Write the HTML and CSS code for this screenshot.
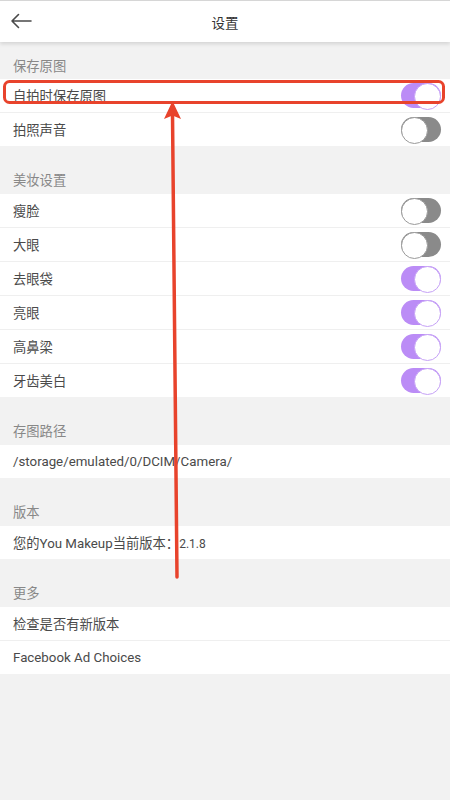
FILE: index.html
```html
<!DOCTYPE html>
<html lang="zh-CN">
<head>
<meta charset="utf-8">
<title>设置</title>
<link rel="stylesheet" href="styles.css">
</head>
<body>
<div class="page">
  <header class="topbar">
    <svg class="back" width="22" height="16" viewBox="0 0 22 16">
      <path d="M21 8H2 M8.5 1.5L2 8l6.5 6.5" fill="none" stroke="#4a4a4a" stroke-width="1.6" stroke-linecap="round" stroke-linejoin="round"/>
    </svg>
    <div class="title">设置</div>
  </header>

  <section class="group first">
    <div class="label">保存原图</div>
    <div class="row"><span>自拍时保存原图</span><span class="switch on"></span></div>
    <div class="row"><span>拍照声音</span><span class="switch"></span></div>
  </section>

  <section class="group">
    <div class="label">美妆设置</div>
    <div class="row"><span>瘦脸</span><span class="switch"></span></div>
    <div class="row"><span>大眼</span><span class="switch"></span></div>
    <div class="row"><span>去眼袋</span><span class="switch on"></span></div>
    <div class="row"><span>亮眼</span><span class="switch on"></span></div>
    <div class="row"><span>高鼻梁</span><span class="switch on"></span></div>
    <div class="row"><span>牙齿美白</span><span class="switch on"></span></div>
  </section>

  <section class="group">
    <div class="label">存图路径</div>
    <div class="row"><span>/storage/emulated/0/DCIM/Camera/</span></div>
  </section>

  <section class="group">
    <div class="label">版本</div>
    <div class="row"><span>您的You Makeup当前版本：<span class="ver">2.1.8</span></span></div>
  </section>

  <section class="group">
    <div class="label">更多</div>
    <div class="row"><span>检查是否有新版本</span></div>
    <div class="row"><span>Facebook Ad Choices</span></div>
  </section>

  <svg class="annotation" width="450" height="800" viewBox="0 0 450 800">
    <rect x="4.5" y="81.5" width="439" height="21" rx="5" ry="5" fill="none" stroke="#e8432c" stroke-width="3"/>
    <line x1="172.5" y1="114" x2="177" y2="577" stroke="#e8432c" stroke-width="3.5" stroke-linecap="round"/>
    <polygon points="172.5,101 164,119 172.5,115.5 181,119" fill="#e8432c"/>
  </svg>
</div>
</body>
</html>
```

FILE: styles.css
```css
* { box-sizing: border-box; }
html, body {
  margin: 0;
  padding: 0;
  background: #f2f2f2;
}
body {
  font-family: Roboto, "Noto Sans CJK SC", sans-serif;
  font-size: 13.3px;
  color: #4a4a4a;
}
.page {
  position: relative;
  width: 450px;
  min-height: 800px;
  background: #f2f2f2;
}
.topbar {
  position: relative;
  height: 42px;
  background: #fff;
  border-top: 1px solid #d6d6d6;
  display: flex;
  align-items: center;
  justify-content: center;
  box-shadow: 0 2px 4px rgba(0, 0, 0, 0.13);
  z-index: 1;
}
.back {
  position: absolute;
  left: 10px;
  top: 12px;
}
.title {
  font-size: 13.5px;
  color: #333;
}
.group {
  display: flex;
  flex-direction: column;
}
.label {
  height: 48px;
  padding-left: 13px;
  display: flex;
  align-items: flex-end;
  padding-bottom: 5px;
  color: #888;
  font-size: 13.3px;
}
.group.first .label {
  height: 37px;
  padding-bottom: 4px;
}
.row {
  height: 33px;
  background: #fff;
  display: flex;
  align-items: center;
  justify-content: space-between;
  padding: 0 9px 0 13px;
  color: #4a4a4a;
}
.row + .row {
  border-top: 1px solid #efefef;
  height: 34px;
}
.ver {
  font-size: 12px;
}
.switch {
  position: relative;
  width: 40px;
  height: 25px;
  border-radius: 13px;
  background: #8a8a8a;
}
.switch::after {
  content: "";
  position: absolute;
  left: 0;
  top: 0;
  width: 25px;
  height: 25px;
  border-radius: 50%;
  background: #fff;
  border: 1px solid #9a9a9a;
}
.switch.on {
  background: #bb8cf6;
}
.switch.on::after {
  left: auto;
  right: 0;
  border-color: #c6a2f6;
}
.annotation {
  position: absolute;
  left: 0;
  top: 0;
  pointer-events: none;
  z-index: 2;
}
```
